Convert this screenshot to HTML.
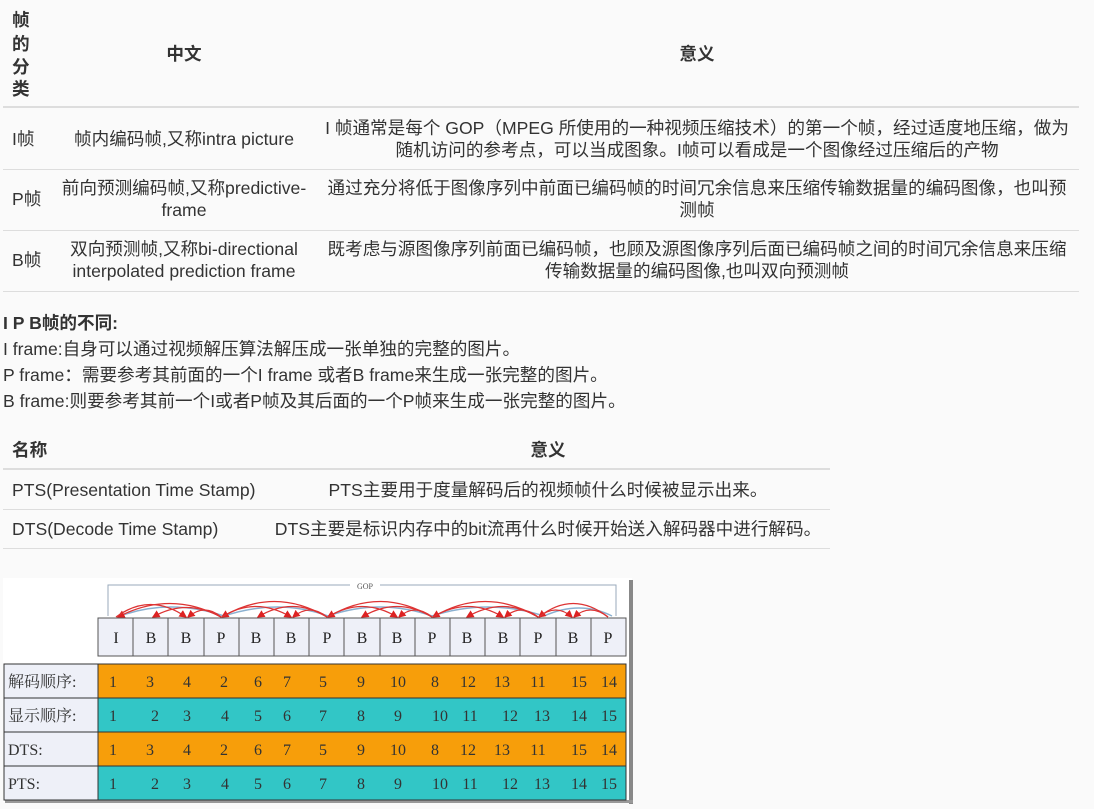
<!DOCTYPE html>
<html><head><meta charset="utf-8"><style>
body{margin:0;width:1094px;height:809px;background:#fafafa;position:relative;overflow:hidden;font-family:"Liberation Sans","Noto Sans CJK SC",sans-serif;font-size:17.6px;color:#333}
.t{position:absolute;white-space:nowrap;line-height:22px;height:22px}
.c{transform:translateX(-50%)}
.b{font-weight:bold}
.l{position:absolute;height:1px;background:#ddd}
</style></head><body>
<div class="t b" style="left:12px;top:9px">帧</div>
<div class="t b" style="left:12px;top:33px">的</div>
<div class="t b" style="left:12px;top:56px">分</div>
<div class="t b" style="left:12px;top:78px">类</div>
<div class="t b c" style="left:184px;top:43px">中文</div>
<div class="t b c" style="left:697px;top:43px">意义</div>
<div class="l" style="left:3px;top:106px;width:1076px;height:2px"></div>

<div class="t" style="left:12px;top:128px">I帧</div>
<div class="t c" style="left:184px;top:128px">帧内编码帧,又称intra picture</div>
<div class="t c" style="left:697px;top:117px">I 帧通常是每个 GOP（MPEG 所使用的一种视频压缩技术）的第一个帧，经过适度地压缩，做为</div>
<div class="t c" style="left:697px;top:139px">随机访问的参考点，可以当成图象。I帧可以看成是一个图像经过压缩后的产物</div>
<div class="l" style="left:3px;top:169px;width:1076px"></div>

<div class="t" style="left:12px;top:188px">P帧</div>
<div class="t c" style="left:184px;top:177px">前向预测编码帧,又称predictive-</div>
<div class="t c" style="left:184px;top:199px">frame</div>
<div class="t c" style="left:697px;top:177px">通过充分将低于图像序列中前面已编码帧的时间冗余信息来压缩传输数据量的编码图像，也叫预</div>
<div class="t c" style="left:697px;top:199px">测帧</div>
<div class="l" style="left:3px;top:230px;width:1076px"></div>

<div class="t" style="left:12px;top:249px">B帧</div>
<div class="t c" style="left:184px;top:238px">双向预测帧,又称bi-directional</div>
<div class="t c" style="left:184px;top:260px">interpolated prediction frame</div>
<div class="t c" style="left:697px;top:238px">既考虑与源图像序列前面已编码帧，也顾及源图像序列后面已编码帧之间的时间冗余信息来压缩</div>
<div class="t c" style="left:697px;top:260px">传输数据量的编码图像,也叫双向预测帧</div>
<div class="l" style="left:3px;top:291px;width:1076px"></div>

<div class="t b" style="left:3px;top:312px">I P B帧的不同:</div>
<div class="t" style="left:3px;top:338px">I frame:自身可以通过视频解压算法解压成一张单独的完整的图片。</div>
<div class="t" style="left:3px;top:364px">P frame：需要参考其前面的一个I frame 或者B frame来生成一张完整的图片。</div>
<div class="t" style="left:3px;top:390px">B frame:则要参考其前一个I或者P帧及其后面的一个P帧来生成一张完整的图片。</div>

<div class="t b" style="left:12px;top:439px">名称</div>
<div class="t b c" style="left:548px;top:439px">意义</div>
<div class="l" style="left:3px;top:468px;width:827px;height:2px"></div>
<div class="t" style="left:12px;top:479px">PTS(Presentation Time Stamp)</div>
<div class="t c" style="left:548px;top:479px">PTS主要用于度量解码后的视频帧什么时候被显示出来。</div>
<div class="l" style="left:3px;top:509px;width:827px"></div>
<div class="t" style="left:12px;top:518px">DTS(Decode Time Stamp)</div>
<div class="t c" style="left:548px;top:518px">DTS主要是标识内存中的bit流再什么时候开始送入解码器中进行解码。</div>
<div class="l" style="left:3px;top:548px;width:827px"></div>

<svg style="position:absolute;left:0;top:575px" width="640" height="234" viewBox="0 575 640 234" font-family="Liberation Serif,Noto Serif CJK SC,serif">
<defs><marker id="a" markerWidth="6" markerHeight="6" refX="5" refY="3" orient="auto"><path d="M0 0L6 3L0 6z" fill="#d22"/></marker></defs>
<rect x="3" y="578" width="629" height="224" fill="#fff"/>
<rect x="629" y="580" width="4" height="224" fill="#888"/>
<rect x="5" y="800" width="628" height="3" fill="#999"/>
<path d="M108 616 V585 H350 M380 585 H616 V616" stroke="#9ab" fill="none"/>
<text x="365" y="589" font-size="8" text-anchor="middle" fill="#555">GOP</text>
<g fill="none" stroke="#8ab0d0" stroke-width="1.5">
<path d="M120 616 Q170 598 224 616"/><path d="M224 616 Q278 598 328 616"/><path d="M328 616 Q380 598 432 616"/><path d="M432 616 Q488 598 544 616"/><path d="M544 616 Q580 600 612 616"/>
</g>
<g fill="none" stroke="#d33" stroke-width="1.3" marker-end="url(#a)">
<path d="M221 617 Q170 590 118 617"/><path d="M221 617 Q186 598 153 617"/><path d="M116 617 Q150 592 186 617"/><path d="M221 617 Q205 603 188 617"/>
<path d="M327 617 Q274 586 222 617"/><path d="M327 617 Q292 596 258 617"/><path d="M222 617 Q255 596 291 617"/><path d="M327 617 Q310 603 293 617"/>
<path d="M432 617 Q380 586 328 617"/><path d="M432 617 Q397 596 362 617"/><path d="M328 617 Q362 596 397 617"/><path d="M432 617 Q415 603 399 617"/>
<path d="M538 617 Q485 586 433 617"/><path d="M538 617 Q503 596 467 617"/><path d="M433 617 Q468 596 503 617"/><path d="M538 617 Q521 603 505 617"/>
<path d="M608 617 Q573 590 539 617"/><path d="M608 617 Q590 603 574 617"/><path d="M539 617 Q556 603 572 617"/>
</g>
<rect x="98" y="618" width="528" height="38" fill="#eef0f8" stroke="#555"/>
<g stroke="#555"><line x1="133" y1="618" x2="133" y2="656"/><line x1="168" y1="618" x2="168" y2="656"/><line x1="204" y1="618" x2="204" y2="656"/><line x1="239" y1="618" x2="239" y2="656"/><line x1="274" y1="618" x2="274" y2="656"/><line x1="309" y1="618" x2="309" y2="656"/><line x1="344" y1="618" x2="344" y2="656"/><line x1="380" y1="618" x2="380" y2="656"/><line x1="415" y1="618" x2="415" y2="656"/><line x1="450" y1="618" x2="450" y2="656"/><line x1="485" y1="618" x2="485" y2="656"/><line x1="520" y1="618" x2="520" y2="656"/><line x1="556" y1="618" x2="556" y2="656"/><line x1="591" y1="618" x2="591" y2="656"/></g>
<g font-size="16" text-anchor="middle" fill="#222">
<text x="116" y="643">I</text><text x="151" y="643">B</text><text x="186" y="643">B</text><text x="221" y="643">P</text><text x="256" y="643">B</text><text x="291" y="643">B</text><text x="327" y="643">P</text><text x="362" y="643">B</text><text x="397" y="643">B</text><text x="432" y="643">P</text><text x="467" y="643">B</text><text x="503" y="643">B</text><text x="538" y="643">P</text><text x="573" y="643">B</text><text x="608" y="643">P</text>
</g>
<rect x="4" y="664" width="94" height="136" fill="#eef0f8"/>
<rect x="98" y="664" width="528" height="34" fill="#f79e0a"/>
<rect x="98" y="698" width="528" height="34" fill="#32c6c6"/>
<rect x="98" y="732" width="528" height="34" fill="#f79e0a"/>
<rect x="98" y="766" width="528" height="34" fill="#32c6c6"/>
<g stroke="#333" fill="none"><rect x="4" y="664" width="622" height="136"/><line x1="98" y1="664" x2="98" y2="800"/><line x1="4" y1="698" x2="626" y2="698"/><line x1="4" y1="732" x2="626" y2="732"/><line x1="4" y1="766" x2="626" y2="766"/></g>
<g font-size="16" fill="#333"><text x="8" y="687">解码顺序:</text><text x="8" y="721">显示顺序:</text><text x="8" y="755">DTS:</text><text x="8" y="789">PTS:</text></g>
<g font-size="16" fill="#333" text-anchor="middle">
<text y="687"><tspan x="113">1</tspan><tspan x="150">3</tspan><tspan x="187">4</tspan><tspan x="224">2</tspan><tspan x="258">6</tspan><tspan x="287">7</tspan><tspan x="323">5</tspan><tspan x="361">9</tspan><tspan x="398">10</tspan><tspan x="435">8</tspan><tspan x="468">12</tspan><tspan x="502">13</tspan><tspan x="538">11</tspan><tspan x="579">15</tspan><tspan x="609">14</tspan></text>
<text y="721"><tspan x="113">1</tspan><tspan x="155">2</tspan><tspan x="187">3</tspan><tspan x="225">4</tspan><tspan x="258">5</tspan><tspan x="287">6</tspan><tspan x="323">7</tspan><tspan x="361">8</tspan><tspan x="398">9</tspan><tspan x="440">10</tspan><tspan x="470">11</tspan><tspan x="510">12</tspan><tspan x="542">13</tspan><tspan x="579">14</tspan><tspan x="609">15</tspan></text>
<text y="755"><tspan x="113">1</tspan><tspan x="150">3</tspan><tspan x="187">4</tspan><tspan x="224">2</tspan><tspan x="258">6</tspan><tspan x="287">7</tspan><tspan x="323">5</tspan><tspan x="361">9</tspan><tspan x="398">10</tspan><tspan x="435">8</tspan><tspan x="468">12</tspan><tspan x="502">13</tspan><tspan x="538">11</tspan><tspan x="579">15</tspan><tspan x="609">14</tspan></text>
<text y="789"><tspan x="113">1</tspan><tspan x="155">2</tspan><tspan x="187">3</tspan><tspan x="225">4</tspan><tspan x="258">5</tspan><tspan x="287">6</tspan><tspan x="323">7</tspan><tspan x="361">8</tspan><tspan x="398">9</tspan><tspan x="440">10</tspan><tspan x="470">11</tspan><tspan x="510">12</tspan><tspan x="542">13</tspan><tspan x="579">14</tspan><tspan x="609">15</tspan></text>
</g>
</svg>
</body></html>
